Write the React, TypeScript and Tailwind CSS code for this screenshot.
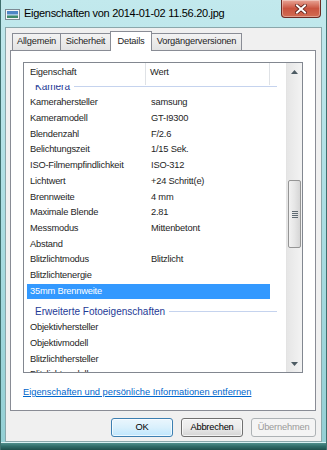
import React from 'react'

type Row = { g: string } | { k: string; v?: string; sel?: boolean }

const rows: Row[] = [
  { g: 'Kamera' },
  { k: 'Kamerahersteller', v: 'samsung' },
  { k: 'Kameramodell', v: 'GT-I9300' },
  { k: 'Blendenzahl', v: 'F/2.6' },
  { k: 'Belichtungszeit', v: '1/15 Sek.' },
  { k: 'ISO-Filmempfindlichkeit', v: 'ISO-312' },
  { k: 'Lichtwert', v: '+24 Schritt(e)' },
  { k: 'Brennweite', v: '4 mm' },
  { k: 'Maximale Blende', v: '2.81' },
  { k: 'Messmodus', v: 'Mittenbetont' },
  { k: 'Abstand' },
  { k: 'Blitzlichtmodus', v: 'Blitzlicht' },
  { k: 'Blitzlichtenergie' },
  { k: '35mm Brennweite', sel: true },
  { g: 'Erweiterte Fotoeigenschaften' },
  { k: 'Objektivhersteller' },
  { k: 'Objektivmodell' },
  { k: 'Blitzlichthersteller' },
  { k: 'Blitzlichtmodell' },
]

function PictureIcon() {
  return (
    <svg width="15" height="11" viewBox="0 0 15 11">
      <rect x="0.5" y="0.5" width="14" height="10" fill="#f4f6f8" stroke="#7d8a94" />
      <rect x="2" y="2" width="11" height="3" fill="#4f86c6" />
      <rect x="2" y="5" width="11" height="1.5" fill="#9fc3e6" />
      <rect x="2" y="6.5" width="11" height="2.5" fill="#3e8a6a" />
    </svg>
  )
}

function CloseButton() {
  return (
    <div className="relative ml-auto mr-[5px] flex h-[18px] w-[40px] items-center justify-center self-start overflow-hidden rounded-b-[4px] border border-t-0 border-[#6d2b24] bg-gradient-to-b from-[#e8a597] via-[#c9533f] to-[#d26c52] shadow-[inset_0_0_0_1px_rgba(255,255,255,.35)]">
      <svg width="12" height="10" viewBox="0 0 12 10">
        <path d="M2 1.5 L10 8.5 M10 1.5 L2 8.5" stroke="#5a1d16" strokeWidth="3.6" strokeLinecap="square" />
        <path d="M2 1.5 L10 8.5 M10 1.5 L2 8.5" stroke="#ffffff" strokeWidth="2" strokeLinecap="square" />
      </svg>
    </div>
  )
}

function Tab({ label, w, active }: { label: string; w: string; active?: boolean }) {
  if (active) {
    return (
      <div className={`relative z-10 -mb-px -ml-px flex h-[20px] ${w} items-start justify-center border border-b-0 border-[#898c95] bg-white pt-[3px]`}>
        {label}
      </div>
    )
  }
  return (
    <div className={`-ml-px flex h-[17px] ${w} items-center justify-center border border-b-0 border-[#898c95] bg-gradient-to-b from-[#f3f3f3] to-[#e3e3e3] first:ml-0`}>
      {label}
    </div>
  )
}

function Scrollbar() {
  return (
    <div className="flex w-[16px] flex-col border-l border-[#e3e3e3] bg-gradient-to-r from-[#e6e6e6] to-[#f3f3f3]">
      <div className="flex h-[17px] items-center justify-center">
        <svg width="7" height="4" viewBox="0 0 7 4"><path d="M0 4 L3.5 0 L7 4 Z" fill="#4d5b63" /></svg>
      </div>
      <div className="h-[100px]" />
      <div className="mx-[1px] flex h-[68px] items-center justify-center rounded-[2px] border border-[#959595] bg-gradient-to-r from-[#f2f2f2] via-[#e6e6e6] to-[#d6d6d6]">
        <div className="flex flex-col gap-[1px]">
          <div className="h-px w-[6px] bg-[#5e6a72]" />
          <div className="h-px w-[6px] bg-[#5e6a72]" />
          <div className="h-px w-[6px] bg-[#5e6a72]" />
          <div className="h-px w-[6px] bg-[#5e6a72]" />
        </div>
      </div>
      <div className="flex-1" />
      <div className="flex h-[17px] items-center justify-center">
        <svg width="7" height="4" viewBox="0 0 7 4"><path d="M0 0 L3.5 4 L7 0 Z" fill="#4d5b63" /></svg>
      </div>
    </div>
  )
}

function PropertyList() {
  return (
    <div className="ml-[12px] mt-[11px] flex h-[311px] w-[280px] border border-[#828790] bg-white">
      <div className="flex min-w-0 flex-1 flex-col overflow-hidden">
        <div className="relative z-10 flex h-[22px] shrink-0 bg-white text-[#1e1e1e]">
          <div className="flex w-[122px] items-center border-r border-[#dfe2e6] pb-[3px] pl-[6px]">Eigenschaft</div>
          <div className="flex w-[124px] items-center border-r border-[#dfe2e6] pb-[3px] pl-[4px]">Wert</div>
          <div className="flex-1" />
        </div>
        <div className="-mt-[10.5px] flex flex-col pl-[3px]">
          {rows.map((r, i) =>
            'g' in r ? (
              <div key={i} className="flex h-[21px] shrink-0 items-center pl-[8px] pr-[9px] pt-[3px] text-[10px] tracking-normal text-[#1e3a96]">
                <span>{r.g}</span>
                <div className="ml-[4px] h-px flex-1 bg-[#c5d3ee]" />
              </div>
            ) : (
              <div
                key={i}
                className={`flex h-[15.7px] w-[243px] shrink-0 items-center pl-[3px] ${r.sel ? 'bg-[#3399ff] text-white' : 'text-[#1e1e1e]'}`}
              >
                <span className="w-[121px] whitespace-nowrap">{r.k}</span>
                <span className="whitespace-nowrap">{r.v}</span>
              </div>
            )
          )}
        </div>
      </div>
      <Scrollbar />
    </div>
  )
}

function Button({ label, kind }: { label: string; kind?: 'default' | 'disabled' }) {
  const base = 'flex h-[19px] items-center justify-center rounded-[3px] border'
  if (kind === 'default')
    return (
      <div className={`${base} w-[62px] border-[#3c7fb1] bg-gradient-to-b from-[#eaf6fd] via-[#d9f0fc] to-[#bee6fd] text-black shadow-[inset_0_0_0_1px_rgba(255,255,255,.7)]`}>
        {label}
      </div>
    )
  if (kind === 'disabled')
    return <div className={`${base} w-[65px] border-[#adb2b5] bg-[#f4f4f4] text-[#9a9a9a]`}>{label}</div>
  return (
    <div className={`${base} w-[62px] border-[#707070] bg-gradient-to-b from-[#f2f2f2] via-[#ebebeb] to-[#d4d4d4] text-black shadow-[inset_0_0_0_1px_rgba(255,255,255,.7)]`}>
      {label}
    </div>
  )
}

export default function App() {
  return (
    <div className="flex h-[450px] w-[327px] flex-col overflow-hidden border-x border-[#3f6f6e] bg-gradient-to-b from-[#c2e9ed] via-[#aadde2] to-[#93cfd4] font-['Liberation_Sans',Arial,sans-serif] text-[9.3px] tracking-[-0.2px] text-[#1e1e1e]">
      <div className="flex h-[27px] shrink-0 items-center">
        <div className="ml-[4px] mt-[1px]"><PictureIcon /></div>
        <span className="ml-[4px] text-[11px] tracking-[-0.3px] text-black">Eigenschaften von 2014-01-02 11.56.20.jpg</span>
        <CloseButton />
      </div>

      <div className="mx-[4px] flex h-[415px] shrink-0 flex-col border border-[#8aa7ab] bg-[#f0f0f0]">
        <div className="ml-[6px] mt-[3px] flex h-[19px] items-end">
          <Tab label="Allgemein" w="w-[49px]" />
          <Tab label="Sicherheit" w="w-[51px]" />
          <Tab label="Details" w="w-[42px]" active />
          <Tab label="Vorgängerversionen" w="w-[91px]" />
        </div>

        <div className="ml-[4px] flex h-[361px] w-[306px] flex-col border border-[#898c95] bg-white">
          <PropertyList />
          <span className="ml-[12px] mt-[13px] self-start text-[9.3px] tracking-normal text-[#0066cc] underline">
            Eigenschaften und persönliche Informationen entfernen
          </span>
        </div>

        <div className="mr-[5px] mt-[7px] flex justify-end gap-[8px]">
          <Button label="OK" kind="default" />
          <Button label="Abbrechen" />
          <Button label="Übernehmen" kind="disabled" />
        </div>
      </div>

      <div className="flex-1 border-t border-[#d9f1f3] bg-gradient-to-b from-[#4f8f8c] via-[#2f6b68] to-[#1f4f4c]" />
    </div>
  )
}
